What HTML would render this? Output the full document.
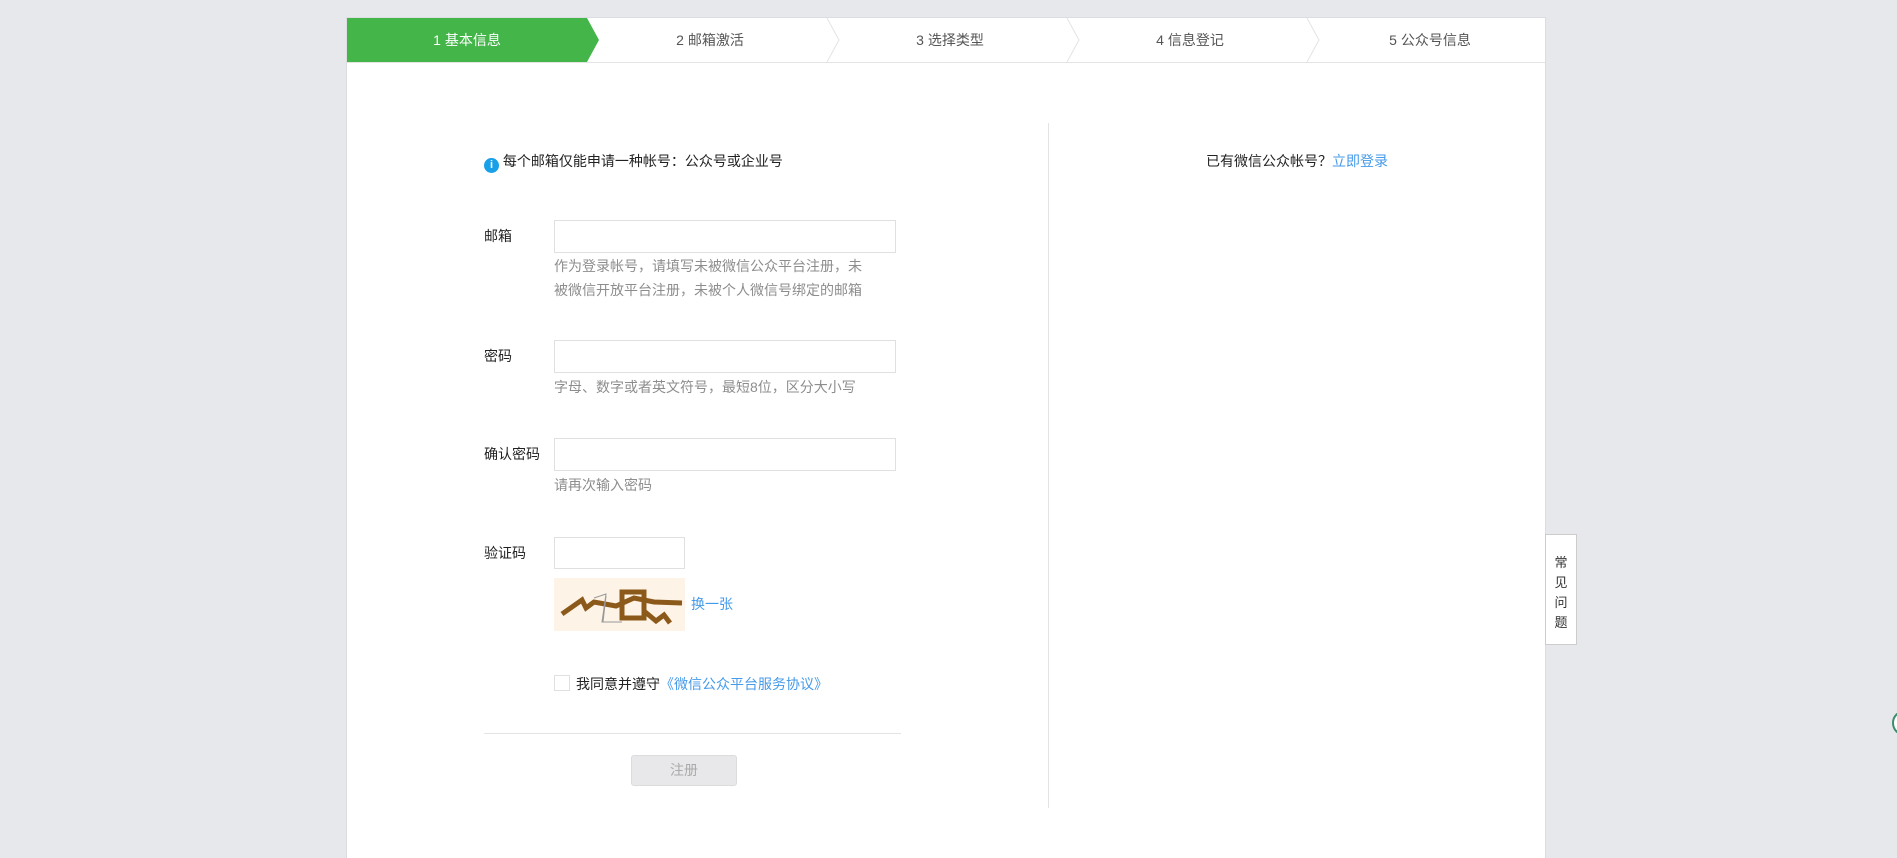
<!DOCTYPE html>
<html><head><meta charset="utf-8"><style>
body{margin:0;width:1897px;height:851px;background:#e7e8eb;font-family:"Liberation Sans","Noto Sans CJK SC",sans-serif;font-size:14px;color:#222;position:relative;overflow:hidden}
.a{position:absolute}
.panel{left:346px;top:17px;width:1198px;height:840px;background:#fff;border:1px solid #dcdde0;border-bottom:none}
.step{top:0;height:44px;line-height:44px;text-align:center;color:#555;width:240px}
.inp{border:1px solid #e0e0e0;background:#fff;box-sizing:border-box}
.lab{left:137px}
.hint{color:#8d8d8d;left:207px;line-height:24px}
</style></head><body>
<div class="a panel">
  <svg class="a" style="left:0;top:0" width="1198" height="46">
    <polygon points="0,0 240,0 252,22 240,44 0,44" fill="#44b549"/>
    <g stroke="#e4e4e4" fill="none"><polyline points="480,0 492,22 480,44"/><polyline points="720,0 732,22 720,44"/><polyline points="960,0 972,22 960,44"/></g>
    <line x1="0" y1="44.5" x2="1198" y2="44.5" stroke="#e4e4e4"/>
  </svg>
  <div class="a step" style="left:0;color:#fff">1 基本信息</div>
  <div class="a step" style="left:243px">2 邮箱激活</div>
  <div class="a step" style="left:483px">3 选择类型</div>
  <div class="a step" style="left:723px">4 信息登记</div>
  <div class="a step" style="left:963px">5 公众号信息</div>
  <div class="a" style="left:701px;top:105px;width:1px;height:685px;background:#e4e4e4"></div>
  <div class="a" style="left:137px;top:133px"><span style="display:inline-block;width:15px;height:15px;border-radius:50%;background:#1aa0e8;color:#fff;font-size:11px;text-align:center;line-height:15px;font-weight:bold;vertical-align:-2px">i</span> 每个邮箱仅能申请一种帐号：公众号或企业号</div>
  <div class="a" style="left:702px;width:496px;top:133px;text-align:center">已有微信公众帐号？<span style="color:#459ae9">立即登录</span></div>
  <div class="a lab" style="top:208px">邮箱</div>
  <div class="a inp" style="left:207px;top:202px;width:342px;height:33px"></div>
  <div class="a hint" style="top:236px">作为登录帐号，请填写未被微信公众平台注册，未<br>被微信开放平台注册，未被个人微信号绑定的邮箱</div>
  <div class="a lab" style="top:328px">密码</div>
  <div class="a inp" style="left:207px;top:322px;width:342px;height:33px"></div>
  <div class="a hint" style="top:357px">字母、数字或者英文符号，最短8位，区分大小写</div>
  <div class="a lab" style="top:426px">确认密码</div>
  <div class="a inp" style="left:207px;top:420px;width:342px;height:33px"></div>
  <div class="a hint" style="top:455px">请再次输入密码</div>
  <div class="a lab" style="top:525px">验证码</div>
  <div class="a inp" style="left:207px;top:519px;width:131px;height:32px"></div>
  <svg class="a" style="left:207px;top:560px" width="131" height="53"><rect width="131" height="53" fill="#fdf3e6"/><path d="M8 36 L28 22 L32 30 L40 24 L62 28 L80 20 L100 24 L128 25" stroke="#8b5a1a" stroke-width="5" fill="none"/><rect x="68" y="14" width="22" height="26" fill="none" stroke="#8b5a1a" stroke-width="5"/><path d="M90 33 l12 10 l8 -6 l6 8" stroke="#8b5a1a" stroke-width="5" fill="none"/><path d="M40 20 l12 -4 l-4 28 l20 0 M52 18 l-3 26" stroke="#999" fill="none"/></svg>
  <div class="a" style="left:344px;top:576px;color:#459ae9">换一张</div>
  <div class="a inp" style="left:207px;top:657px;width:16px;height:16px"></div>
  <div class="a" style="left:229px;top:656px">我同意并遵守<span style="color:#459ae9">《微信公众平台服务协议》</span></div>
  <div class="a" style="left:137px;top:715px;width:417px;height:1px;background:#e4e4e4"></div>
  <div class="a" style="left:284px;top:737px;width:106px;height:31px;background:#e8e8ea;border:1px solid #dcdcdc;border-radius:3px;box-sizing:border-box;color:#aaa;text-align:center;line-height:29px">注册</div>
</div>
<div class="a" style="left:1545px;top:534px;width:32px;height:111px;background:#fff;border:1px solid #ccc;box-sizing:border-box;text-align:center;font-size:13px;line-height:20px;padding-top:18px;color:#333">常<br>见<br>问<br>题</div>
<div class="a" style="left:1892px;top:710px;width:26px;height:26px;border-radius:50%;background:#fff;border:2px solid #3a8f6a;box-sizing:border-box"></div>
</body></html>
